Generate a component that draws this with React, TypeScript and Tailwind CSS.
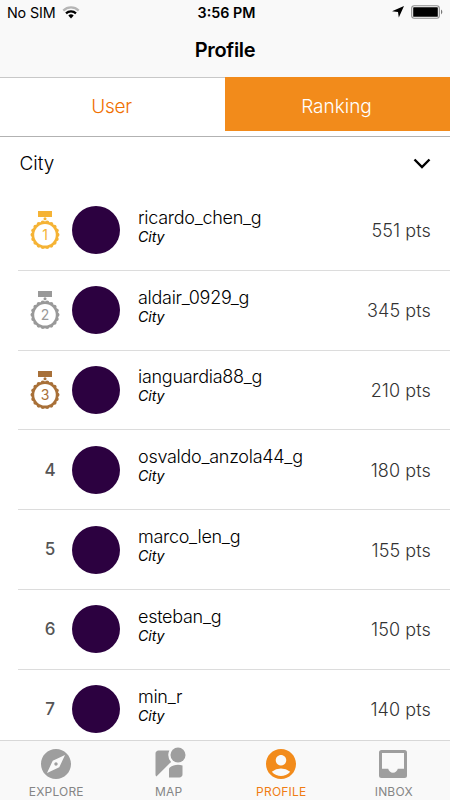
import { MdAccountCircle, MdExplore, MdStreetview } from "react-icons/md";
import { clsx } from "clsx";

interface Player {
    rank: number;
    name: string;
    points: number;
}

const players: Player[] = [
    { rank: 1, name: "ricardo_chen_g", points: 551 },
    { rank: 2, name: "aldair_0929_g", points: 345 },
    { rank: 3, name: "ianguardia88_g", points: 210 },
    { rank: 4, name: "osvaldo_anzola44_g", points: 180 },
    { rank: 5, name: "marco_len_g", points: 155 },
    { rank: 6, name: "esteban_g", points: 150 },
    { rank: 7, name: "min_r", points: 140 },
];

const medalColors = ["text-[#f5b335]", "text-[#999999]", "text-[#a87038]"];

// scalloped outer edge of the medal
const scallops = Array.from({ length: 18 }, (_, i) => {
    const angle = (i * Math.PI * 2) / 18;
    return [15 + Math.cos(angle) * 12.4, 24.8 + Math.sin(angle) * 12.4];
});

function Medal({ rank }: { rank: number }) {
    return (
        <svg
            viewBox="0 0 30 40"
            className={clsx("h-10 w-[30px]", medalColors[rank - 1])}
            fill="currentColor"
        >
            <rect x="8" y="1" width="14" height="6" />
            <circle cx="15" cy="8.8" r="1.5" />
            <circle cx="15" cy="24.8" r="13.4" />
            {scallops.map(([cx, cy], i) => (
                <circle key={i} cx={cx} cy={cy} r="2.1" />
            ))}
            <circle cx="15" cy="24.8" r="10.8" fill="#fff" />
            <text x="15" y="29.8" textAnchor="middle" fontSize="14">
                {rank}
            </text>
        </svg>
    );
}

function StatusBar() {
    return (
        <div className="grid h-[25px] grid-cols-3 items-center px-[7px] text-[14.3px] leading-6">
            <div className="flex items-center gap-2">
                <span className="tracking-[-0.15px]">No SIM</span>
                <svg viewBox="0 0 18 13" className="h-[13px] w-[18px] -translate-x-px" fill="none" strokeWidth="2.2">
                    <path d="M1.3 4.6a11 11 0 0 1 15.4 0" stroke="#b5b5b5" />
                    <path d="M4 7.4a7.2 7.2 0 0 1 10 0" stroke="#000" />
                    <path d="M6.3 9.5a4 4 0 0 1 5.4 0L9 12.5z" fill="#000" />
                </svg>
            </div>
            <span className="pl-[3px] text-center font-semibold">3:56 PM</span>
            <div className="flex -translate-y-px items-center justify-end gap-[7px]">
                <svg viewBox="0 0 12 12" className="size-3">
                    <path d="M12 0 6.8 11.6 6 6 0 5.3z" />
                </svg>
                <svg viewBox="0 0 32 14" className="h-3.5 w-8">
                    <rect x="0.7" y="0.7" width="27.6" height="12.6" rx="2.5" fill="none" stroke="#8c8c8c" strokeWidth="1.1" />
                    <rect x="2.2" y="2.2" width="24.6" height="9.6" rx="0.6" />
                    <path d="M30 4.6c1.8.8 1.8 4 0 4.8z" fill="#777" />
                </svg>
            </div>
        </div>
    );
}

function PlayerRow({ rank, name, points }: Player) {
    return (
        <li className="ml-[18px] flex h-[79.8px] shrink-0 items-center border-b border-[#dcdcdc] pr-[19px]">
            <div className="flex w-[54px] items-center pl-3">
                {rank <= 3 ? (
                    <Medal rank={rank} />
                ) : (
                    <span className="w-10 pt-px text-center text-[17px] font-medium text-[#555]">{rank}</span>
                )}
            </div>
            <div className="size-12 rounded-full bg-[#2c0140]" />
            <div className="-mt-[9px] ml-[18px] flex-1">
                <p className="text-[18px] leading-[22px] font-light tracking-[-0.28px] text-black">{name}</p>
                <p className="text-[14.3px] leading-4 tracking-[-0.1px] text-black italic">City</p>
            </div>
            <p className="pt-px text-[18px] font-light tracking-[0.1px] text-[#333]">{points} pts</p>
        </li>
    );
}

function InboxIcon() {
    return (
        <svg viewBox="0 0 28 28" className="size-7 -translate-x-px" fill="currentColor" fillRule="evenodd">
            <path d="M2.5 0h23A2.5 2.5 0 0 1 28 2.5v23a2.5 2.5 0 0 1-2.5 2.5h-23A2.5 2.5 0 0 1 0 25.5v-23A2.5 2.5 0 0 1 2.5 0zM3 3v15.8h6.2c.5 2.3 2.4 4 4.8 4s4.3-1.7 4.8-4H25V3z" />
        </svg>
    );
}

const navItems = [
    { label: "EXPLORE", icon: <MdExplore className="size-9" /> },
    { label: "MAP", icon: <MdStreetview className="size-9" /> },
    { label: "PROFILE", icon: <MdAccountCircle className="size-9" />, active: true },
    { label: "INBOX", icon: <InboxIcon /> },
];

export default function App() {
    return (
        <div className="flex h-[800px] w-[450px] flex-col overflow-hidden bg-white font-['Inter','Liberation_Sans',sans-serif] text-black">
            <header className="h-[78px] shrink-0 border-b border-[#c8c8c8] bg-[#f9f9f9]">
                <StatusBar />
                <h1 className="pt-2.5 text-center text-[20px] leading-[30px] font-semibold tracking-[-0.3px]">
                    Profile
                </h1>
            </header>
            <div className="flex h-[59px] shrink-0 border-b border-[#b2b2b2] text-[19px] font-light">
                <button className="h-[54px] flex-1 pt-1 pr-0.5 tracking-[-0.25px] text-[#f07000]">User</button>
                <button className="-mt-px h-[54px] flex-1 bg-[#f28b1b] pt-1.5 pr-0.5 text-white">
                    Ranking
                </button>
            </div>
            <div className="flex h-[54px] shrink-0 items-center justify-between pr-5 pl-[19.5px]">
                <span className="text-[19px] font-light">City</span>
                <svg viewBox="0 0 18 12" className="h-3 w-[18px] translate-x-px" fill="none" stroke="#000" strokeWidth="2.4">
                    <path d="m1.5 1.5 7.5 7.5L16.5 1.5" />
                </svg>
            </div>
            <ul className="flex min-h-0 flex-1 flex-col overflow-hidden">
                {players.map((player) => (
                    <PlayerRow key={player.rank} {...player} />
                ))}
            </ul>
            <nav className="grid h-[60px] shrink-0 grid-cols-4 border-t border-[#d8d8d8] bg-[#f9f9f9]">
                {navItems.map(({ label, icon, active }) => (
                    <div
                        key={label}
                        className={clsx(
                            "flex flex-col items-center pt-[5px]",
                            active ? "text-[#f28b1b]" : "text-[#9e9e9e]"
                        )}
                    >
                        <div className="flex h-9 items-center">{icon}</div>
                        <span
                            className={clsx(
                                "pt-0.5 text-[12px] leading-4 tracking-[0.2px]",
                                active ? "text-[#f07d13]" : "text-[#858585]"
                            )}
                        >
                            {label}
                        </span>
                    </div>
                ))}
            </nav>
        </div>
    );
}
